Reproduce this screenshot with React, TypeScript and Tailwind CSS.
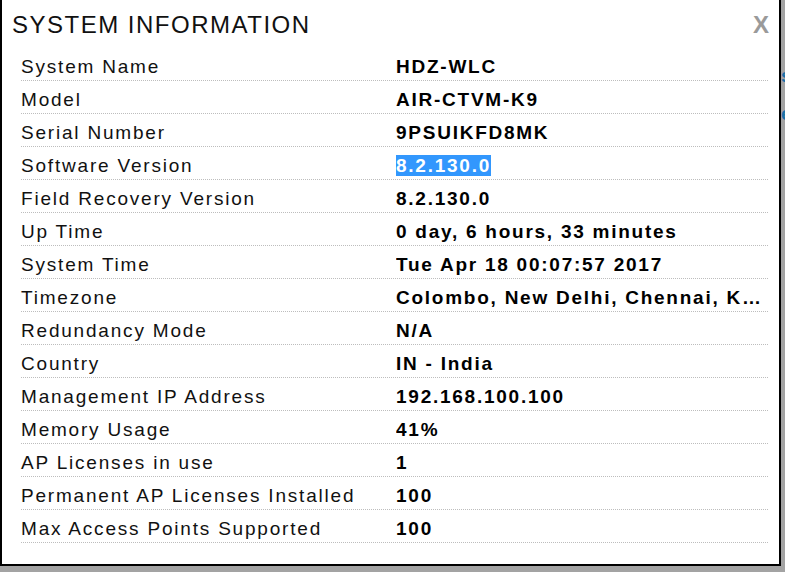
import React from "react";

const ROWS: Array<{ label: string; value: string; selected?: boolean }> = [
  { label: "System Name", value: "HDZ-WLC" },
  { label: "Model", value: "AIR-CTVM-K9" },
  { label: "Serial Number", value: "9PSUIKFD8MK" },
  { label: "Software Version", value: "8.2.130.0", selected: true },
  { label: "Field Recovery Version", value: "8.2.130.0" },
  { label: "Up Time", value: "0 day, 6 hours, 33 minutes" },
  { label: "System Time", value: "Tue Apr 18 00:07:57 2017" },
  { label: "Timezone", value: "Colombo, New Delhi, Chennai, Kolkata" },
  { label: "Redundancy Mode", value: "N/A" },
  { label: "Country", value: "IN - India" },
  { label: "Management IP Address", value: "192.168.100.100" },
  { label: "Memory Usage", value: "41%" },
  { label: "AP Licenses in use", value: "1" },
  { label: "Permanent AP Licenses Installed", value: "100" },
  { label: "Max Access Points Supported", value: "100" },
];

export default function App() {
  return (
    <div
      className="relative w-[785px] h-[572px] overflow-hidden bg-[#a3a3a3]"
      style={{ fontFamily: '"Liberation Sans", Arial, sans-serif' }}
    >
      {/* bits of the page behind the dialog */}
      <span className="absolute left-[781px] top-[62px] text-[19px] font-bold text-[#1b6fa8]">s</span>
      <span className="absolute left-[781px] top-[100px] text-[19px] font-bold text-[#1b6fa8]">e</span>

      <div className="w-[781px] h-[566px] bg-white border-l-2 border-r-2 border-b-2 border-black">
        {/* Header */}
        <div className="flex justify-between pl-[10px] pr-[10px] pt-[11px]">
          <h1 className="text-[24px] leading-[28px] tracking-[1.5px] text-[#111]">SYSTEM INFORMATION</h1>
          <button className="text-[24px] leading-[28px] font-bold text-[#9a9a9a]">X</button>
        </div>

        {/* Info table */}
        <div className="mt-[9px] ml-[19px] w-[747px]">
          {ROWS.map((row) => (
            <div
              key={row.label}
              className="flex h-[33px] pt-[5px] leading-[27px] text-[19px] border-b border-dotted border-[#bdbdbd]"
            >
              <div className="w-[375px] shrink-0 tracking-[1.8px] text-[#111]">{row.label}</div>
              <div className="flex-1 min-w-0 truncate tracking-[1.75px] font-bold text-black">
                {row.selected ? (
                  <span className="bg-[#3297fd] text-white">{row.value}</span>
                ) : (
                  row.value
                )}
              </div>
            </div>
          ))}
        </div>
      </div>
    </div>
  );
}
